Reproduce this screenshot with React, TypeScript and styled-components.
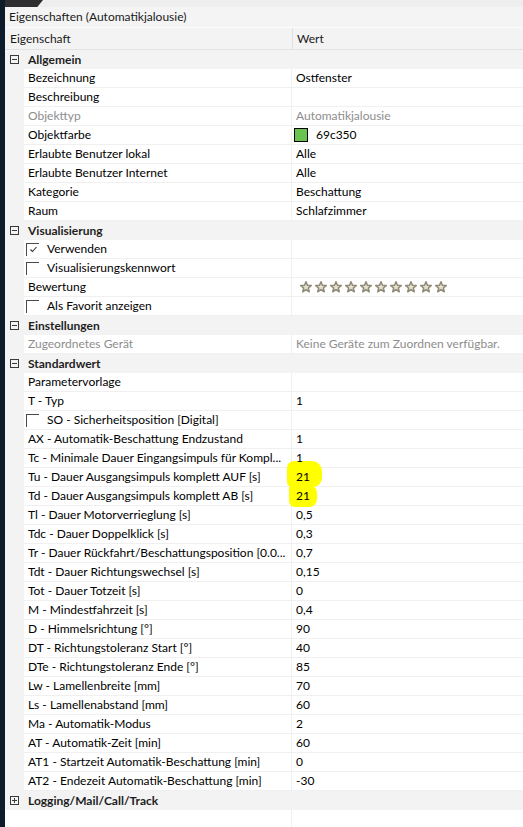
import React from "react";
import styled, { createGlobalStyle } from "styled-components";

const Global = createGlobalStyle`
  html, body { margin: 0; padding: 0; background: #ffffff; }
  body { font-family: Lato, "Open Sans", sans-serif; font-size: 12px; color: #000; }
`;

const Page = styled.div`
  display: flex;
  min-height: 100vh;
  width: 523px;
  overflow: hidden;
`;

const LeftStrip = styled.div`
  width: 5px;
  flex: none;
  background: #0d1b2a;
`;

const Panel = styled.div`
  flex: 1;
  display: flex;
  flex-direction: column;
  min-width: 0;
`;

const TopBar = styled.div`
  height: 7px;
  display: flex;
  background: #eeeeee;
`;

const TopTab = styled.div`
  width: 38px;
  background: #2e2e30;
  clip-path: polygon(0 0, 100% 0, 85% 100%, 0 100%);
`;

const Title = styled.div`
  height: 20px;
  line-height: 20px;
  padding-left: 4px;
  background: #f4f4f4;
  color: #1a1a1a;
  border-bottom: 1px solid #fbfbfb;
`;

const Header = styled.div`
  display: flex;
  height: 22px;
  line-height: 21px;
  background: #f3f3f3;
  border-bottom: 1px solid #e3e3e3;
  box-sizing: border-box;
`;

const HeaderCell = styled.div<{ $w?: number }>`
  ${(p) => (p.$w ? `width: ${p.$w}px; flex: none;` : "flex: 1;")}
  box-sizing: border-box;
  padding-left: 5px;
  color: #1a1a1a;
  & + & { border-left: 1px solid #e0e0e0; padding-left: 4px; }
`;

const CatRow = styled.div`
  display: flex;
  align-items: center;
  height: 19px;
  background: #f3f3f3;
  box-sizing: border-box;
`;

const ExpandBox = styled.div`
  width: 9px;
  height: 9px;
  margin: 0 9px 0 5px;
  border: 1px solid #3a3a3a;
  box-sizing: border-box;
  position: relative;
  flex: none;
  &::before {
    content: "";
    position: absolute;
    left: 1px; right: 1px; top: 3px;
    height: 1px;
    background: #3a3a3a;
  }
`;

const PlusBox = styled(ExpandBox)`
  &::after {
    content: "";
    position: absolute;
    top: 1px; bottom: 1px; left: 3px;
    width: 1px;
    background: #3a3a3a;
  }
`;

const CatLabel = styled.div`
  font-weight: 700;
  color: #1e1e1e;
`;

const Row = styled.div`
  display: flex;
  height: 19px;
`;

const Gutter = styled.div`
  width: 19px;
  flex: none;
  background: #f3f3f3;
`;

const NameCell = styled.div<{ $dim?: boolean }>`
  width: 267px;
  flex: none;
  box-sizing: border-box;
  border-bottom: 1px solid #f0f0f0;
  background: #fff;
  padding-left: 4px;
  line-height: 18px;
  white-space: nowrap;
  overflow: hidden;
  display: flex;
  align-items: center;
  color: ${(p) => (p.$dim ? "#8d8d8d" : "#000")};
`;

const ValueCell = styled.div<{ $dim?: boolean }>`
  flex: 1;
  box-sizing: border-box;
  border-bottom: 1px solid #f0f0f0;
  border-left: 1px solid #f0f0f0;
  background: #fff;
  padding-left: 4px;
  line-height: 18px;
  white-space: nowrap;
  display: flex;
  align-items: center;
  position: relative;
  color: ${(p) => (p.$dim ? "#8d8d8d" : "#000")};
`;

const CheckBox = styled.div`
  width: 13px;
  height: 13px;
  box-sizing: border-box;
  border-top: 1px solid #4a4a4a;
  border-left: 1px solid #4a4a4a;
  margin-left: -2px;
  margin-right: 8px;
  flex: none;
  display: flex;
  align-items: center;
  justify-content: center;
`;

const Swatch = styled.div<{ $c: string }>`
  width: 14px;
  height: 14px;
  box-sizing: border-box;
  border: 1px solid #000;
  background: ${(p) => p.$c};
  margin-left: -2px;
  margin-right: 8px;
`;

const Stars = styled.div`
  display: flex;
  gap: 3px;
  padding-left: 4px;
`;

const Mark = styled.span<{ $v: number }>`
  position: absolute;
  background: #ffff00;
  z-index: 1;
  ${(p) =>
    p.$v === 0
      ? "left: -5px; top: -7px; width: 35px; height: 26px; border-radius: 7px 10px 9px 5px;"
      : "left: -3px; top: -2px; width: 28px; height: 22px; border-radius: 4px 8px 8px 6px;"}
`;

const ValText = styled.span`
  position: relative;
  z-index: 2;
`;

const Filler = styled.div`
  flex: 1;
  display: flex;
  background: #fff;
`;

const FillerLeft = styled.div`
  width: 286px;
  border-right: 1px solid #f0f0f0;
`;

const Star = () => (
  <svg width="12" height="12" viewBox="0 0 24 24">
    <path
      d="M12 1.5 L14.9 8.6 L22.5 9.1 L16.6 14 L18.5 21.5 L12 17.4 L5.5 21.5 L7.4 14 L1.5 9.1 L9.1 8.6 Z"
      fill="#e4e0d2"
      stroke="#8f8a74"
      strokeWidth="3"
      strokeLinejoin="round"
    />
  </svg>
);

const Check = () => (
  <svg width="9" height="9" viewBox="0 0 9 9">
    <path d="M1.5 4.5 L3.5 6.5 L7.5 2" fill="none" stroke="#333" strokeWidth="1.1" />
  </svg>
);

type Item =
  | { cat: string; open?: boolean }
  | {
      name: string;
      value?: string;
      dim?: boolean;
      check?: boolean | "on";
      swatch?: string;
      stars?: boolean;
      mark?: number;
    };

const items: Item[] = [
  { cat: "Allgemein", open: true },
  { name: "Bezeichnung", value: "Ostfenster" },
  { name: "Beschreibung", value: "" },
  { name: "Objekttyp", value: "Automatikjalousie", dim: true },
  { name: "Objektfarbe", value: "69c350", swatch: "#69c350" },
  { name: "Erlaubte Benutzer lokal", value: "Alle" },
  { name: "Erlaubte Benutzer Internet", value: "Alle" },
  { name: "Kategorie", value: "Beschattung" },
  { name: "Raum", value: "Schlafzimmer" },
  { cat: "Visualisierung", open: true },
  { name: "Verwenden", check: "on" },
  { name: "Visualisierungskennwort", check: true },
  { name: "Bewertung", stars: true },
  { name: "Als Favorit anzeigen", check: true },
  { cat: "Einstellungen", open: true },
  { name: "Zugeordnetes Gerät", value: "Keine Geräte zum Zuordnen verfügbar.", dim: true },
  { cat: "Standardwert", open: true },
  { name: "Parametervorlage", value: "" },
  { name: "T - Typ", value: "1" },
  { name: "SO - Sicherheitsposition [Digital]", check: true },
  { name: "AX - Automatik-Beschattung Endzustand", value: "1" },
  { name: "Tc - Minimale Dauer Eingangsimpuls für Kompl...", value: "1" },
  { name: "Tu - Dauer Ausgangsimpuls komplett AUF [s]", value: "21", mark: 0 },
  { name: "Td - Dauer Ausgangsimpuls komplett AB [s]", value: "21", mark: 1 },
  { name: "Tl - Dauer Motorverrieglung [s]", value: "0,5" },
  { name: "Tdc - Dauer Doppelklick [s]", value: "0,3" },
  { name: "Tr - Dauer Rückfahrt/Beschattungsposition [0.0...", value: "0,7" },
  { name: "Tdt - Dauer Richtungswechsel [s]", value: "0,15" },
  { name: "Tot - Dauer Totzeit [s]", value: "0" },
  { name: "M - Mindestfahrzeit [s]", value: "0,4" },
  { name: "D - Himmelsrichtung [°]", value: "90" },
  { name: "DT - Richtungstoleranz Start [°]", value: "40" },
  { name: "DTe - Richtungstoleranz Ende [°]", value: "85" },
  { name: "Lw - Lamellenbreite [mm]", value: "70" },
  { name: "Ls - Lamellenabstand [mm]", value: "60" },
  { name: "Ma - Automatik-Modus", value: "2" },
  { name: "AT - Automatik-Zeit [min]", value: "60" },
  { name: "AT1 - Startzeit Automatik-Beschattung [min]", value: "0" },
  { name: "AT2 - Endezeit Automatik-Beschattung [min]", value: "-30" },
  { cat: "Logging/Mail/Call/Track", open: false },
];

export default function App() {
  return (
    <>
      <Global />
      <Page>
        <LeftStrip />
        <Panel>
          <TopBar>
            <TopTab />
          </TopBar>
          <Title>Eigenschaften (Automatikjalousie)</Title>
          <Header>
            <HeaderCell $w={287}>Eigenschaft</HeaderCell>
            <HeaderCell>Wert</HeaderCell>
          </Header>
          {items.map((it, i) =>
            "cat" in it ? (
              <CatRow key={i}>
                {it.open ? <ExpandBox /> : <PlusBox />}
                <CatLabel>{it.cat}</CatLabel>
              </CatRow>
            ) : (
              <Row key={i}>
                <Gutter />
                <NameCell $dim={it.dim}>
                  {it.check && <CheckBox>{it.check === "on" && <Check />}</CheckBox>}
                  {it.name}
                </NameCell>
                {it.stars ? (
                  <ValueCell>
                    <Stars>
                      {Array.from({ length: 10 }).map((_, k) => (
                        <Star key={k} />
                      ))}
                    </Stars>
                  </ValueCell>
                ) : (
                  <ValueCell $dim={it.dim}>
                    {it.swatch && <Swatch $c={it.swatch} />}
                    {it.mark !== undefined && <Mark $v={it.mark} />}
                    <ValText>{it.value}</ValText>
                  </ValueCell>
                )}
              </Row>
            )
          )}
          <Filler>
            <FillerLeft />
          </Filler>
        </Panel>
      </Page>
    </>
  );
}
